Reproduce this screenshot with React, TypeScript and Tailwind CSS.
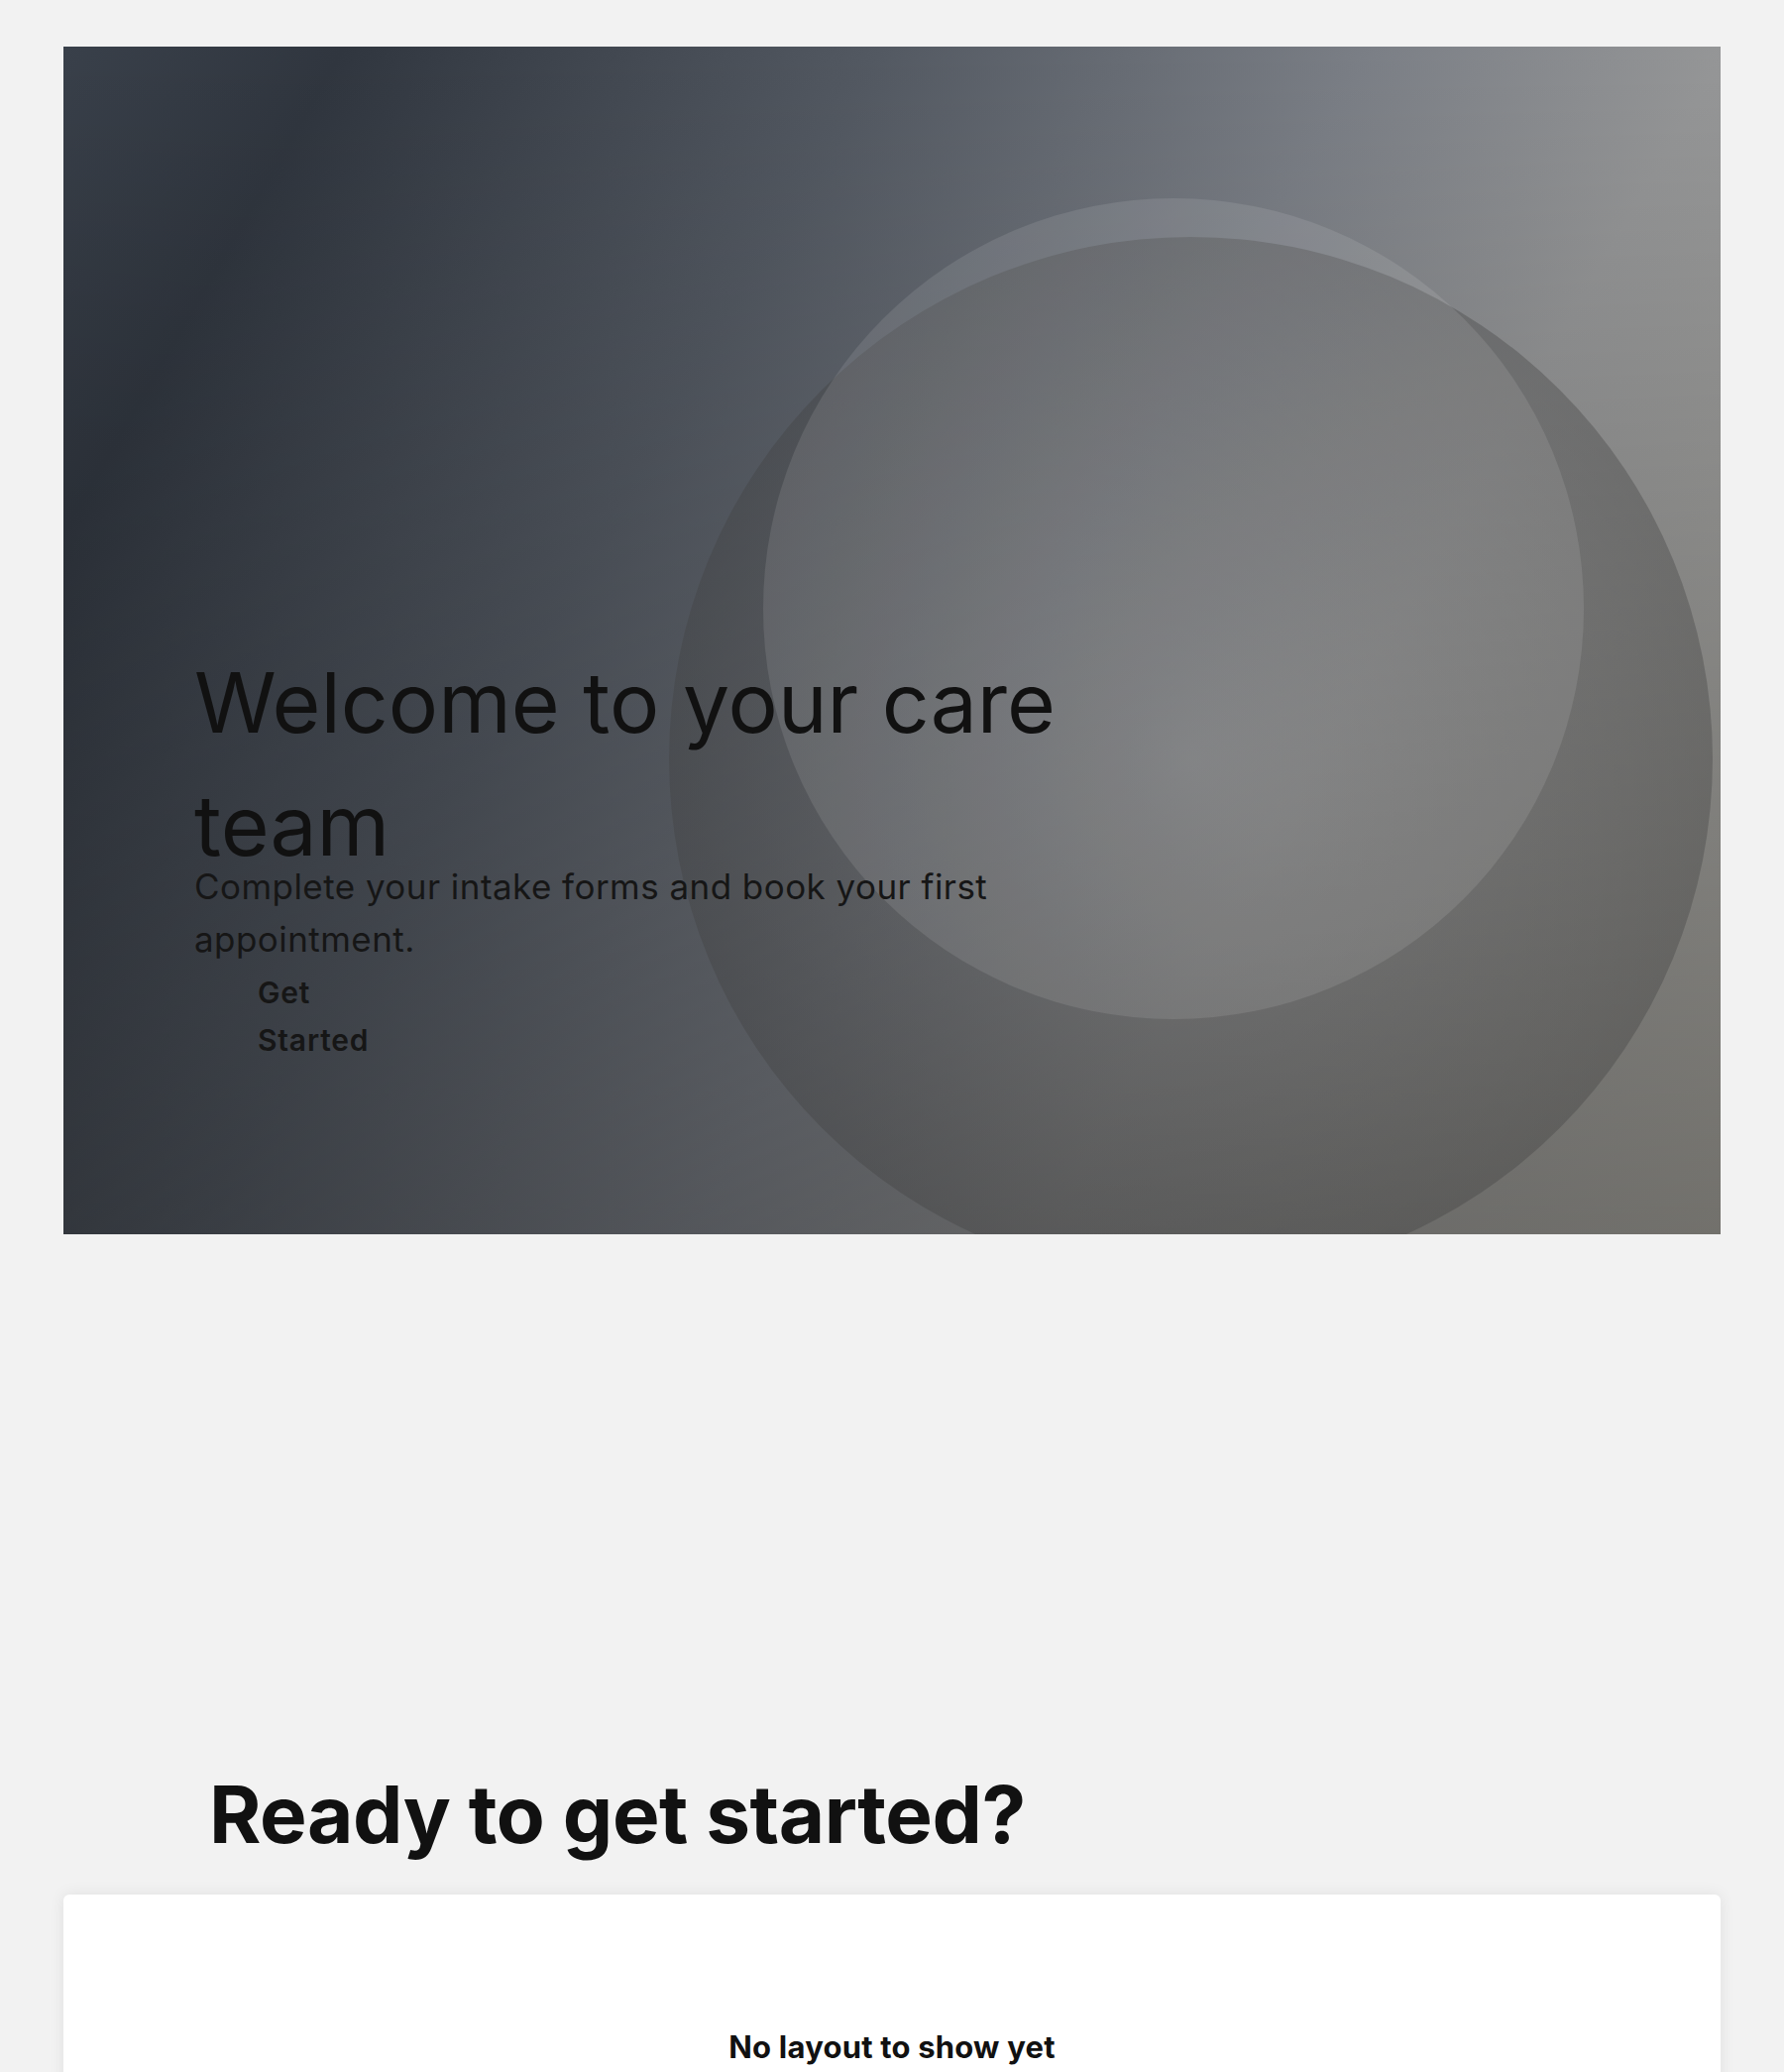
export default function App() {
  return (
    <div className="h-[2090px] overflow-hidden bg-[#f2f2f2] px-16 pt-[47px] font-['Inter',sans-serif] text-[#111111]">
      {/* Hero */}
      <section className="relative h-[1198px] overflow-hidden bg-[linear-gradient(120deg,#39404a_0%,#30363f_12%,#535962_35%,#7b7f86_56%,#959697_71%,#a8a69f_100%)]">
        <div className="absolute inset-0 bg-[linear-gradient(to_bottom,rgba(0,0,0,0)_0%,rgba(0,0,0,0.32)_100%)]" />
        <div className="absolute left-[611px] top-[192px] h-[1053px] w-[1053px] rounded-full bg-[radial-gradient(circle,rgba(125,125,125,0.3)_0%,rgba(70,70,70,0.34)_60%,rgba(48,48,48,0.42)_100%)]" />
        <div className="absolute left-[706px] top-[153px] h-[828px] w-[828px] rounded-full bg-white/10" />

        <div className="relative max-w-[1032px] pl-[132px] pt-[600px]">
          <h1 className="text-[84px] font-normal leading-[124px]">Welcome to your care team</h1>
          <p className="-mt-[27px] text-[35px] leading-[53px] tracking-[0.45px] text-[#161616]">
            Complete your intake forms and book your first appointment.
          </p>
          <button className="mt-[3px] w-[200px] px-16 text-left text-[30px] font-semibold leading-[48px] tracking-[0.8px] text-[#161616]">
            Get Started
          </button>
        </div>
      </section>

      {/* CTA */}
      <h2 className="mt-[537px] pl-[147px] text-[80px] font-bold leading-[96px] tracking-[-0.5px]">Ready to get started?</h2>
      <div className="mt-[33px] h-[400px] rounded-md bg-white pt-[134px] text-center shadow-[0_0_16px_rgba(0,0,0,0.08)]">
        <p className="text-[31px] font-bold leading-[39px] tracking-[0.2px]">No layout to show yet</p>
      </div>
    </div>
  )
}
